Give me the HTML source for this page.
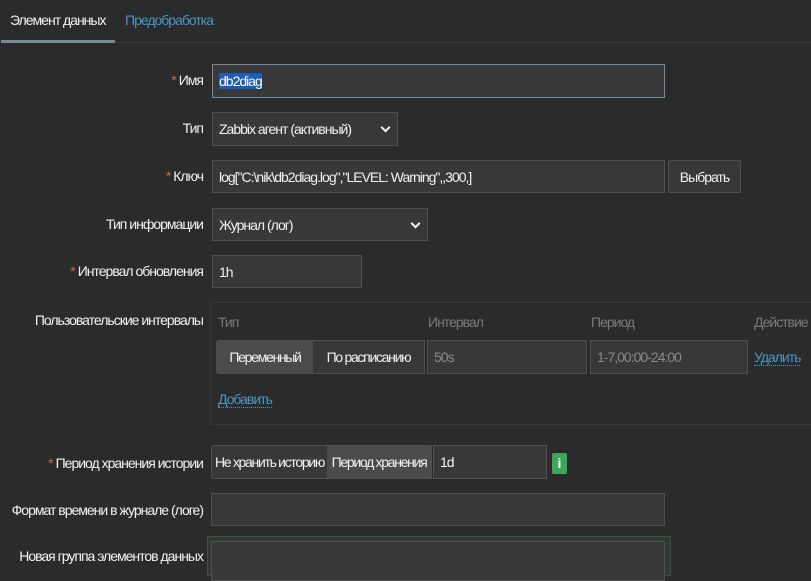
<!DOCTYPE html>
<html><head><meta charset="utf-8"><style>
*{box-sizing:border-box;margin:0;padding:0}
body{width:811px;height:574px;background:#2b2b2b;font-family:"Liberation Sans",sans-serif;font-size:14px;letter-spacing:-1px;color:#f2f2f2;position:relative;overflow:hidden}
.a{position:absolute;white-space:nowrap}
.lbl{position:absolute;right:608px;white-space:nowrap;color:#f2f2f2}
.req{color:#e45959;margin-right:3px}
.in{position:absolute;background:#383838;border:1px solid #4f4f4f;padding:0 6px;display:flex;align-items:center;white-space:nowrap}
.seg{padding:0;justify-content:center;letter-spacing:-1.3px}
.chev{position:absolute;right:8px;top:50%;width:7px;height:7px;border-right:2px solid #f2f2f2;border-bottom:2px solid #f2f2f2;transform:translateY(-70%) rotate(45deg)}
.hd{color:#7a7a7a}
.lnk{color:#4796c4;border-bottom:1px dotted #4796c4}
</style></head><body>
<div class="a" style="left:10px;top:12px;color:#f2f2f2">Элемент данных</div>
<div class="a" style="left:125px;top:12px;color:#4796c4">Предобработка</div>
<div class="a" style="left:0;top:42px;width:811px;height:1px;background:#383838"></div>
<div class="a" style="left:1px;top:40px;width:114px;height:3px;background:#768d99"></div>

<div class="lbl" style="top:72px"><span class="req">*</span>Имя</div>
<div class="in" style="left:212px;top:64px;width:453px;height:34px;border-color:#768d99"><span style="background:#1c5db8;color:#fff">db2diag</span></div>

<div class="lbl" style="top:120px">Тип</div>
<div class="in" style="left:212px;top:112px;width:186px;height:34px">Zabbix агент (активный)<span class="chev"></span></div>

<div class="lbl" style="top:168px"><span class="req">*</span>Ключ</div>
<div class="in" style="left:212px;top:160px;width:453px;height:33px">log["C:\nik\db2diag.log","LEVEL: Warning",,300,]</div>
<div class="in" style="left:668px;top:160px;width:73px;height:33px;justify-content:center;border-radius:2px">Выбрать</div>

<div class="lbl" style="top:216px">Тип информации</div>
<div class="in" style="left:212px;top:208px;width:216px;height:33px">Журнал (лог)<span class="chev"></span></div>

<div class="lbl" style="top:263px"><span class="req">*</span>Интервал обновления</div>
<div class="in" style="left:212px;top:255px;width:150px;height:33px">1h</div>

<div class="lbl" style="top:312px">Пользовательские интервалы</div>
<div class="a" style="left:210px;top:302px;width:610px;height:123px;border:1px solid #383838"></div>
<div class="a hd" style="left:218px;top:314px">Тип</div>
<div class="a hd" style="left:428px;top:314px">Интервал</div>
<div class="a hd" style="left:591px;top:314px">Период</div>
<div class="a hd" style="left:754px;top:314px">Действие</div>
<div class="in seg" style="left:216px;top:340px;width:98px;height:34px;background:#4b4b4b;border-radius:3px 0 0 3px">Переменный</div>
<div class="in seg" style="left:313px;top:340px;width:112px;height:34px;border-left:0">По расписанию</div>
<div class="in" style="left:427px;top:340px;width:160px;height:34px;color:#8a8a8a">50s</div>
<div class="in" style="left:590px;top:340px;width:158px;height:34px;color:#8a8a8a">1-7,00:00-24:00</div>
<div class="a" style="left:754px;top:349px"><span class="lnk">Удалить</span></div>
<div class="a" style="left:218px;top:391px"><span class="lnk">Добавить</span></div>

<div class="lbl" style="top:455px"><span class="req">*</span>Период хранения истории</div>
<div class="in seg" style="left:211px;top:445px;width:117px;height:34px;border-radius:3px 0 0 3px">Не хранить историю</div>
<div class="in seg" style="left:327px;top:445px;width:105px;height:34px;background:#4b4b4b;border-left:0">Период хранения</div>
<div class="in" style="left:433px;top:445px;width:114px;height:34px">1d</div>
<div class="a" style="left:552px;top:453px;width:15px;height:21px;background:#3aa95a;border-radius:2px;color:#fff;font-weight:bold;text-align:center;line-height:21px;letter-spacing:0">i</div>

<div class="lbl" style="top:502px">Формат времени в журнале (логе)</div>
<div class="in" style="left:211px;top:493px;width:454px;height:33px"></div>

<div class="lbl" style="top:548px">Новая группа элементов данных</div>
<div class="a" style="left:207px;top:536px;width:464px;height:40px;background:#2f3a33;border:1px solid #3d5244"></div>
<div class="in" style="left:211px;top:541px;width:454px;height:40px"></div>
</body></html>
